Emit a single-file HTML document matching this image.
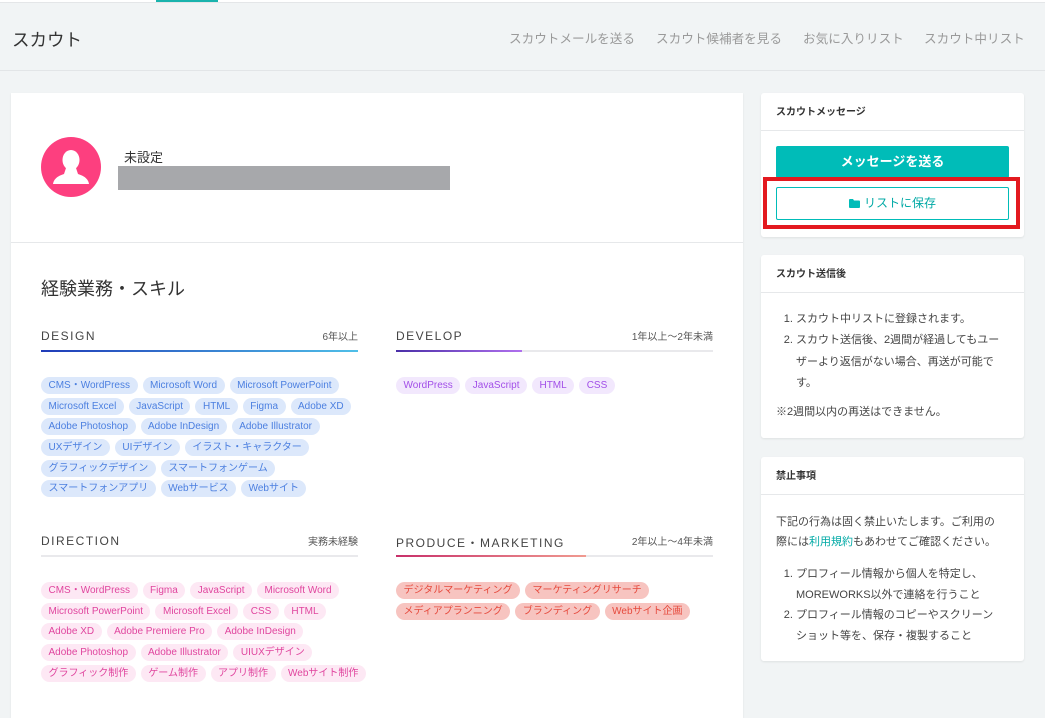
<!DOCTYPE html>
<html><head><meta charset="utf-8"><style>
*{margin:0;padding:0;box-sizing:border-box}
html,body{width:1045px;height:718px;overflow:hidden}
body{background:#f1f4f5;font-family:"Liberation Sans","Noto Sans CJK JP",sans-serif;color:#333;position:relative}
.abs{position:absolute}
.topline{left:0;top:0;width:1045px;height:3px;background:#fff;border-bottom:1px solid #e4e6e8}
.nav a{position:absolute;top:28px;font-size:12.6px;color:#9a9a9a;text-decoration:none;white-space:nowrap}
.card{position:absolute;background:#fff;border-radius:3px;box-shadow:0 1px 2px rgba(0,0,0,.08)}
.sh{font-size:10px;font-weight:bold;color:#333;padding:0 15px;height:38px;line-height:40px;border-bottom:1px solid #e6e8ea}
.col{position:absolute;width:317px}
.ch{height:22px;position:relative}
.ch b{font-weight:normal;font-size:12px;letter-spacing:1.5px;color:#444;position:absolute;left:0;top:1px}
.ch span{font-size:10px;color:#555;position:absolute;right:0;top:0}
.bar{height:2px;background:#e9e9ec;position:relative}
.bar i{position:absolute;left:0;top:0;height:2px}
.tags{margin-top:25px}
.tags div{display:flex;gap:5px;margin-bottom:3.7px;white-space:nowrap}
.tags span{font-size:10px;height:17px;line-height:17px;padding:0 7.5px;border-radius:9px;white-space:nowrap}
.blue span{background:#dce8fb;color:#4b7fe0}
.purp span{background:#f2e8fd;color:#a24fe8}
.pink span{background:#fde8f4;color:#e0459e}
.red span{background:#f7c4c0;color:#e64a3d}
ol{padding-left:20px;font-size:11px;line-height:21.3px;color:#444}
p.s{font-size:11px;line-height:20px;color:#444}
</style></head><body>
<div class="abs topline"></div>
<div class="abs" style="left:156px;top:0;width:62px;height:2px;background:#1ab3ad"></div>
<div class="abs" style="left:12px;top:27px;font-size:17.5px;color:#333">スカウト</div>
<div class="nav">
<a style="left:509px">スカウトメールを送る</a>
<a style="left:656px">スカウト候補者を見る</a>
<a style="left:803px">お気に入りリスト</a>
<a style="left:924px">スカウト中リスト</a>
</div>
<div class="abs" style="left:0;top:70px;width:1045px;height:1px;background:#e2e5e7"></div>

<div class="card" style="left:11px;top:93px;width:732px;height:625px;border-radius:0">
 <div class="abs" style="left:30px;top:44px;width:60px;height:60px;border-radius:50%;background:#fd3f7f;overflow:hidden">
  <svg width="60" height="60" viewBox="0 0 60 60"><ellipse cx="30" cy="23" rx="8.5" ry="10" fill="#fff"/><path d="M25 31 L35 31 L37 37 Q47 40 48 47 L12 47 Q13 40 23 37 Z" fill="#fff"/></svg>
 </div>
 <div class="abs" style="left:113px;top:54px;font-size:13px;color:#333">未設定</div>
 <div class="abs" style="left:107px;top:73px;width:332px;height:24px;background:#a7a8ab"></div>
 <div class="abs" style="left:0;top:149px;width:732px;height:1px;background:#e6e8ea"></div>
 <div class="abs" style="left:30px;top:182px;font-size:18px;color:#333">経験業務・スキル</div>

 <div class="col" style="left:30px;top:235px">
  <div class="ch"><b>DESIGN</b><span>6年以上</span></div>
  <div class="bar"><i style="width:317px;background:linear-gradient(90deg,#1f3bb8,#4fbfe8)"></i></div>
  <div class="tags blue">
   <div><span>CMS・WordPress</span><span>Microsoft Word</span><span>Microsoft PowerPoint</span></div>
   <div><span>Microsoft Excel</span><span>JavaScript</span><span>HTML</span><span>Figma</span><span>Adobe XD</span></div>
   <div><span>Adobe Photoshop</span><span>Adobe InDesign</span><span>Adobe Illustrator</span></div>
   <div><span>UXデザイン</span><span>UIデザイン</span><span>イラスト・キャラクター</span></div>
   <div><span>グラフィックデザイン</span><span>スマートフォンゲーム</span></div>
   <div><span>スマートフォンアプリ</span><span>Webサービス</span><span>Webサイト</span></div>
  </div>
 </div>
 <div class="col" style="left:385px;top:235px">
  <div class="ch"><b>DEVELOP</b><span>1年以上〜2年未満</span></div>
  <div class="bar"><i style="width:126px;background:linear-gradient(90deg,#4a2fa8,#b070ee)"></i></div>
  <div class="tags purp"><div><span>WordPress</span><span>JavaScript</span><span>HTML</span><span>CSS</span></div></div>
 </div>
 <div class="col" style="left:30px;top:440px">
  <div class="ch"><b>DIRECTION</b><span>実務未経験</span></div>
  <div class="bar"></div>
  <div class="tags pink">
   <div><span>CMS・WordPress</span><span>Figma</span><span>JavaScript</span><span>Microsoft Word</span></div>
   <div><span>Microsoft PowerPoint</span><span>Microsoft Excel</span><span>CSS</span><span>HTML</span></div>
   <div><span>Adobe XD</span><span>Adobe Premiere Pro</span><span>Adobe InDesign</span></div>
   <div><span>Adobe Photoshop</span><span>Adobe Illustrator</span><span>UIUXデザイン</span></div>
   <div><span>グラフィック制作</span><span>ゲーム制作</span><span>アプリ制作</span><span>Webサイト制作</span></div>
  </div>
 </div>
 <div class="col" style="left:385px;top:440px">
  <div class="ch"><b>PRODUCE・MARKETING</b><span>2年以上〜4年未満</span></div>
  <div class="bar"><i style="width:190px;background:linear-gradient(90deg,#c8306a,#f09a90)"></i></div>
  <div class="tags red">
   <div><span>デジタルマーケティング</span><span>マーケティングリサーチ</span></div>
   <div><span>メディアプランニング</span><span>ブランディング</span><span>Webサイト企画</span></div>
  </div>
 </div>
</div>

<div class="card" style="left:761px;top:93px;width:263px;height:144px">
 <div class="sh">スカウトメッセージ</div>
 <div class="abs" style="left:15px;top:53px;width:233px;height:32px;background:#00bcb8;border-radius:2px;color:#fff;font-size:13px;font-weight:bold;text-align:center;line-height:32px">メッセージを送る</div>
 <div class="abs" style="left:2px;top:84px;width:257px;height:52px;border:4px solid #e3191f"></div>
 <div class="abs" style="left:15px;top:94px;width:233px;height:33px;border:1px solid #00bcb8;border-radius:2px;color:#00a9a5;font-size:12px;text-align:center;line-height:31px"><svg width="11" height="9" viewBox="0 0 11 9" style="vertical-align:-1px;margin-right:4px"><path d="M0 1Q0 0 1 0H4L5 1.5H10Q11 1.5 11 2.5V8Q11 9 10 9H1Q0 9 0 8Z" fill="#00bcb8"/></svg>リストに保存</div>
</div>

<div class="card" style="left:761px;top:255px;width:263px;height:183px">
 <div class="sh">スカウト送信後</div>
 <div style="padding:16px 15px 0 15px">
  <ol><li>スカウト中リストに登録されます。</li><li>スカウト送信後、2週間が経過してもユーザーより返信がない場合、再送が可能です。</li></ol>
  <p class="s" style="margin-top:8px">※2週間以内の再送はできません。</p>
 </div>
</div>

<div class="card" style="left:761px;top:457px;width:263px;height:204px">
 <div class="sh">禁止事項</div>
 <div style="padding:17px 20px 0 15px">
  <p class="s">下記の行為は固く禁止いたします。ご利用の際には<span style="color:#00a9a5">利用規約</span>もあわせてご確認ください。</p>
  <ol style="margin-top:12px;line-height:20.5px"><li>プロフィール情報から個人を特定し、MOREWORKS以外で連絡を行うこと</li><li>プロフィール情報のコピーやスクリーンショット等を、保存・複製すること</li></ol>
 </div>
</div>
</body></html>
